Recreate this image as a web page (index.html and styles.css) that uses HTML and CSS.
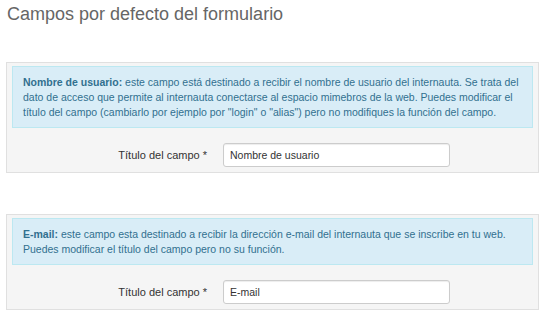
FILE: index.html
```html
<!DOCTYPE html>
<html lang="es">
<head>
  <meta charset="UTF-8" />
  <meta name="viewport" content="width=device-width, initial-scale=1.0"/>
  <title>Campos por defecto del formulario</title>
  <link rel="stylesheet" href="styles.css">
</head>
<body>

  <h1 class="page-title">Campos por defecto del formulario</h1>

  <div class="field-panel first">
    <div class="info">
      <strong>Nombre de usuario:</strong> este campo está destinado a recibir el nombre de usuario del internauta. Se trata del dato de acceso que permite al internauta conectarse al espacio mimebros de la web. Puedes modificar el título del campo (cambiarlo por ejemplo por "login" o "alias") pero no modifiques la función del campo.
    </div>
    <div class="form-row">
      <label for="f-user">Título del campo *</label>
      <input type="text" id="f-user" value="Nombre de usuario" />
    </div>
  </div>

  <div class="field-panel">
    <div class="info">
      <strong>E-mail:</strong> este campo esta destinado a recibir la dirección e-mail del internauta que se inscribe en tu web. Puedes modificar el título del campo pero no su función.
    </div>
    <div class="form-row">
      <label for="f-mail">Título del campo *</label>
      <input type="text" id="f-mail" value="E-mail" />
    </div>
  </div>

</body>
</html>
```

FILE: styles.css
```css
body {
  margin: 0;
  font-family: "Liberation Sans", Arial, sans-serif;
  background-color: #fff;
  color: #333;
}
.page-title {
  margin: 0;
  padding: 3px 0 0 7px;
  font-size: 18px;
  line-height: 22px;
  font-weight: normal;
  color: #666;
}
.field-panel {
  margin: 0 10px 0 6px;
  padding: 3px 5px 5px 5px;
  background: #f5f5f5;
  border: 1px solid #e0e0e0;
}
.field-panel.first {
  margin-top: 37px;
  margin-bottom: 41px;
}
.info {
  padding: 8px 10px 7px 10px;
  background: #d9edf7;
  border: 1px solid #bce8f1;
  color: #31708f;
  font-size: 10.5px;
  line-height: 15px;
}
.info strong {
  font-weight: bold;
}
.form-row {
  display: flex;
  align-items: center;
  margin-top: 15px;
}
.form-row label {
  width: 195px;
  margin-right: 16px;
  text-align: right;
  font-size: 11px;
  color: #333;
}
.form-row input {
  box-sizing: border-box;
  width: 227px;
  height: 24px;
  padding: 0 6px;
  font-family: "Liberation Sans", Arial, sans-serif;
  font-size: 10.5px;
  color: #333;
  background: #fff;
  border: 1px solid #ccc;
  border-radius: 3px;
  box-shadow: inset 0 1px 1px rgba(0,0,0,0.075);
}
```
